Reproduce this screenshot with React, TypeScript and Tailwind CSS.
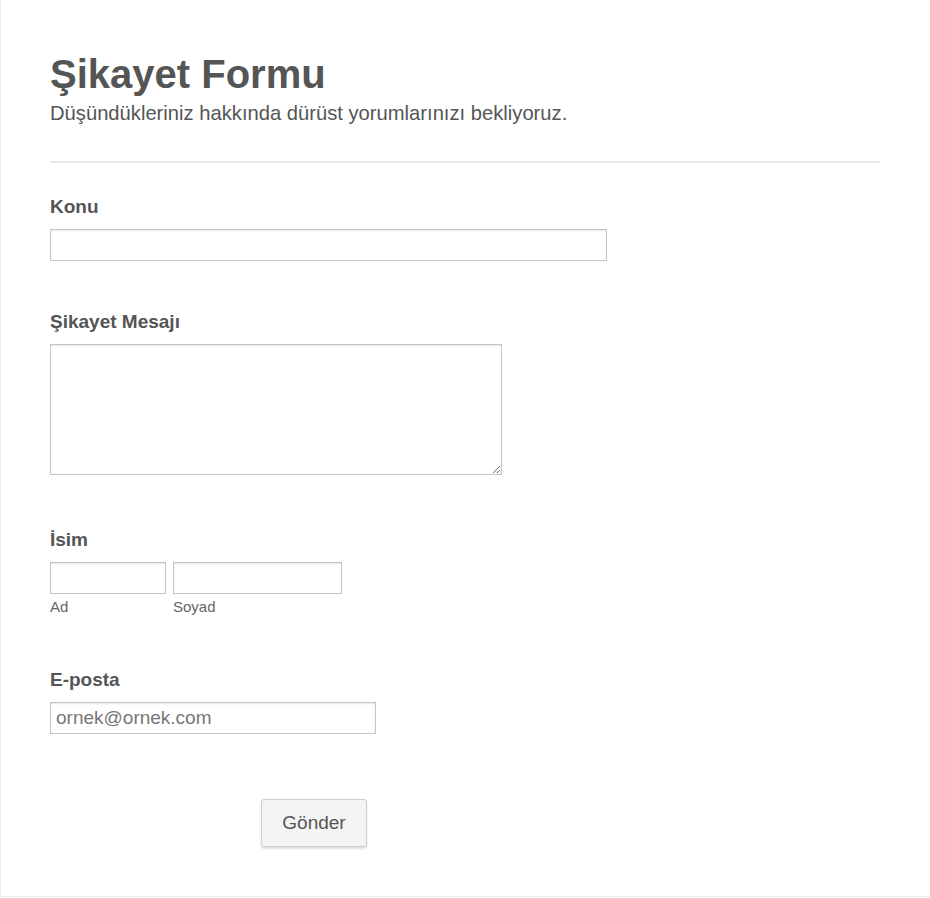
import React from "react";

const inputCls =
  "block h-[32px] border border-[#c6c6c6] bg-white shadow-[inset_0_1px_2px_rgba(0,0,0,0.1)] outline-none px-[5px] text-[19px] text-[#555] placeholder:text-[#777]";

export default function App() {
  return (
    <div
      className="min-h-[897px] w-[930px] border-l border-b border-[#ececec] bg-white text-[#555]"
      style={{ fontFamily: '"Liberation Sans", Arial, sans-serif' }}
    >
      <div className="pl-[49px] pr-[50px] pt-[50px]">
        <h1 className="text-[40px] font-bold leading-[48px]">Şikayet Formu</h1>
        <p className="text-[20.2px] leading-[28px] mt-[1px]">
          Düşündükleriniz hakkında dürüst yorumlarınızı bekliyoruz.
        </p>
        <div className="mt-[34px] h-[2px] bg-[#e8e8e8]" />

        <div className="mt-[33px]">
          <label className="block text-[19px] font-bold leading-[22px]">Konu</label>
          <input className={`${inputCls} mt-[11px] w-[557px]`} />
        </div>

        <div className="mt-[50px]">
          <label className="block text-[19px] font-bold leading-[22px]">Şikayet Mesajı</label>
          <textarea className="block mt-[11px] w-[452px] h-[131px] border border-[#c6c6c6] bg-white shadow-[inset_0_1px_2px_rgba(0,0,0,0.1)] outline-none resize" />
        </div>

        <div className="mt-[54px]">
          <label className="block text-[19px] font-bold leading-[22px]">İsim</label>
          <div className="mt-[11px] flex gap-[7px]">
            <div>
              <input className={`${inputCls} w-[116px]`} />
              <div className="text-[15px] leading-[16px] mt-[5px] text-[#666]">Ad</div>
            </div>
            <div>
              <input className={`${inputCls} w-[169px]`} />
              <div className="text-[15px] leading-[16px] mt-[5px] text-[#666]">Soyad</div>
            </div>
          </div>
        </div>

        <div className="mt-[54px]">
          <label className="block text-[19px] font-bold leading-[22px]">E-posta</label>
          <input
            className={`${inputCls} mt-[11px] w-[326px]`}
            placeholder="ornek@ornek.com"
          />
        </div>

        <div className="mt-[65px] pl-[211px]">
          <button className="h-[48px] w-[106px] rounded-[3px] border border-[#cdcdcd] bg-[#f4f4f4] text-[19px] text-[#555] shadow-[0_2px_2px_rgba(0,0,0,0.12)]">
            Gönder
          </button>
        </div>
      </div>
    </div>
  );
}
